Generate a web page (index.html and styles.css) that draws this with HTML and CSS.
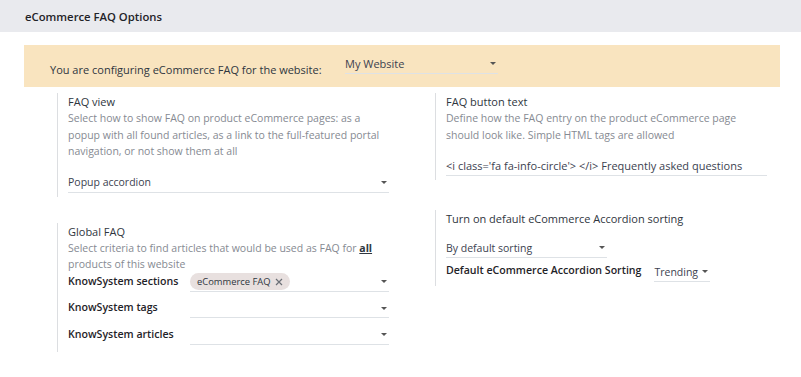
FILE: index.html
```html
<!DOCTYPE html>
<html lang="en">

<head>
    <meta charset="UTF-8">
    <meta name="viewport" content="width=device-width, initial-scale=1.0">
    <title>eCommerce FAQ Options</title>
    <link rel="stylesheet" href="styles.css">
</head>

<body>
    <div class="header">
        <h2>eCommerce FAQ Options</h2>
    </div>

    <div class="container">
        <div class="banner">
            <span class="banner-text">You are configuring eCommerce FAQ for the website:</span>
            <div class="select website">
                <span>My Website</span>
                <span class="caret"></span>
            </div>
        </div>

        <div class="settings">
            <div class="column">
                <div class="box">
                    <div class="title">FAQ view</div>
                    <div class="desc">Select how to show FAQ on product eCommerce pages: as a popup with all found articles, as a link to the full-featured portal navigation, or not show them at all</div>
                    <div class="select wide">
                        <span class="small">Popup accordion</span>
                        <span class="caret"></span>
                    </div>
                </div>

                <div class="box second-left">
                    <div class="title">Global FAQ</div>
                    <div class="desc">Select criteria to find articles that would be used as FAQ for <u class="strong">all</u> products of this website</div>
                    <div class="field">
                        <label>KnowSystem sections</label>
                        <div class="select grow">
                            <span class="chip">eCommerce FAQ
                                <svg class="close" width="8" height="8" viewBox="0 0 8 8">
                                    <path d="M1 1L7 7M7 1L1 7" stroke="#6b6f76" stroke-width="1.2" />
                                </svg>
                            </span>
                            <span class="caret"></span>
                        </div>
                    </div>
                    <div class="field">
                        <label>KnowSystem tags</label>
                        <div class="select grow">
                            <span></span>
                            <span class="caret"></span>
                        </div>
                    </div>
                    <div class="field">
                        <label>KnowSystem articles</label>
                        <div class="select grow">
                            <span></span>
                            <span class="caret"></span>
                        </div>
                    </div>
                </div>
            </div>

            <div class="column">
                <div class="box">
                    <div class="title">FAQ button text</div>
                    <div class="desc">Define how the FAQ entry on the product eCommerce page should look like. Simple HTML tags are allowed</div>
                    <div class="select wide input">
                        <span>&lt;i class='fa fa-info-circle'&gt; &lt;/i&gt; Frequently asked questions</span>
                    </div>
                </div>

                <div class="box second-right">
                    <div class="title">Turn on default eCommerce Accordion sorting</div>
                    <div class="select sorting">
                        <span class="small">By default sorting</span>
                        <span class="caret"></span>
                    </div>
                    <div class="field inline">
                        <label>Default eCommerce Accordion Sorting</label>
                        <div class="select trending">
                            <span class="small">Trending</span>
                            <span class="caret"></span>
                        </div>
                    </div>
                </div>
            </div>
        </div>
    </div>
</body>

</html>
```

FILE: styles.css
```css
body {
    margin: 0;
    font-family: "Open Sans", "Liberation Sans", sans-serif;
    font-size: 11px;
    color: #374151;
    background-color: #fff;
}

.header {
    background-color: #e9eaee;
    height: 32px;
    display: flex;
    align-items: center;
    padding-left: 25px;
}

.header h2 {
    margin: 0;
    font-size: 11.3px;
    font-weight: 600;
    color: #1f2328;
}

.container {
    margin: 13px 21px 0 24px;
}

.banner {
    background-color: #f9e4bf;
    height: 42px;
    display: flex;
    align-items: center;
    padding-left: 26px;
}

.banner-text {
    width: 295px;
    white-space: nowrap;
    margin-top: 6px;
    color: #2f3640;
}

.select {
    display: flex;
    align-items: center;
    justify-content: space-between;
    border-bottom: 1px solid #dee2e6;
    height: 19px;
    color: #3c4250;
}

.small {
    font-size: 10.5px;
}

.website {
    width: 153px;
    margin-bottom: 4px;
}

.caret {
    width: 0;
    height: 0;
    border-left: 3px solid transparent;
    border-right: 3px solid transparent;
    border-top: 3px solid #555;
    margin-right: 2px;
}

.settings {
    display: flex;
    margin-top: 6px;
}

.column {
    width: 378px;
    display: flex;
    flex-direction: column;
}

.box {
    margin-left: 33px;
    margin-right: 13px;
    border-left: 1px solid #dcdee1;
    padding-left: 10px;
    padding-bottom: 4px;
}

.second-left {
    margin-top: 26px;
    padding-bottom: 0;
}

.second-right {
    margin-top: 30px;
}

.title {
    line-height: 17px;
    color: #2f3640;
    font-weight: 500;
}

.desc {
    font-size: 10.5px;
    line-height: 16.5px;
    color: #868a92;
}

.strong {
    color: #2f3640;
    font-weight: 700;
}

.wide {
    margin-top: 13px;
}

.field {
    display: flex;
    align-items: flex-start;
    height: 26.5px;
}

.field label {
    width: 122px;
    font-size: 10.6px;
    font-weight: 600;
    color: #1f2328;
    line-height: 17px;
}

.grow {
    flex: 1;
    height: 18px;
    margin-top: 0;
}

.chip {
    background-color: #e8e0df;
    border-radius: 9px;
    padding: 0 7px;
    height: 17px;
    display: inline-flex;
    align-items: center;
    font-size: 9.4px;
    color: #2f3640;
}

.close {
    margin-left: 4px;
}

.sorting {
    width: 161px;
    margin-top: 11px;
}

.inline {
    margin-top: 4px;
    height: auto;
}

.inline label {
    width: auto;
    margin-right: 13px;
}

.trending {
    width: 56px;
}
```
